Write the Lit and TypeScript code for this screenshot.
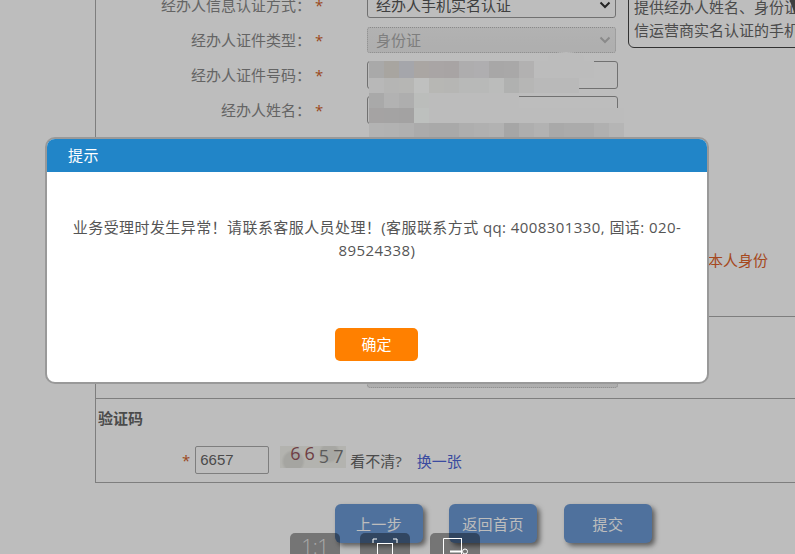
import { LitElement, html, css } from "lit";
import { customElement } from "lit/decorators.js";

const L = "#bcbcbc";
const mosaicRows: string[][] = [
  ["#a9a9a9","#a8a5a0","#a5a6ab","#aaa6a3","#a9a5a5","#a8a4a4","#aeadae","#afaeb0","#a8a7a7","#a9a8a8","#b2b1b1",L,L,L,L],
  ["#b8b8b8","#b5b5b4","#b6b6b4","#bfc0bf","#b7b7b4","#b6b6b4","#b8b9b8","#b8b9b8","#bbbcbb","#b0b1b0","#b6b6b5","#b9b9b9","#b9b9b9","#b9b9b9"],
  ["#a9a9a9","#b2b2b2","#aeaeae","#bbbdbb",L,L,L,L,L,L],
  ["#a5a3a3","#a4a3a3","#a3a2a2","#bdc0be",L,L,L,L,L,L,L,L,L,L,L,L,L],
  ["#b3b3b3","#b2b2b2","#b0b0b0","#ababab","#a9a9a9","#a9a9a9","#aeaeae","#b0b0b0","#b2b2b2","#a6a6a6","#aeaeae","#b2b2b2","#a9a9a9","#ababab","#ababab","#b0b0b0","#b5b5b5"],
];

@customElement("app-root")
export class AppRoot extends LitElement {
  static styles = css`
    :host { display: block; position: relative; width: 795px; height: 554px; overflow: hidden; background: #fff;
      font-family: "Open Sans", "Noto Sans CJK SC", sans-serif; font-size: 15px; color: #666; }
    * { box-sizing: border-box; }
    .form { margin: -13px 0 0 95px; height: 496px; border-left: 1px solid #aaa; border-bottom: 1px solid #aaa; display: flex; flex-direction: column; }
    .row { display: grid; grid-template-columns: 215px 56px 251px; height: 35px; align-items: center; flex: none; }
    .lab { text-align: right; color: #888; white-space: nowrap; }
    .star { color: #d2622a; padding-left: 4px; }
    .ctrl { height: 28px; border: 1px solid #999; border-radius: 3px; background: #fff; display: flex; align-items: center; justify-content: space-between; padding: 0 4px 0 8px; color: #555; white-space: nowrap; }
    .ctrl.sel { width: 249px; height: 26px; }
    .ctrl.off { border: 1px dotted #bbb; background: linear-gradient(#f0f0f0, #ececec); color: #aaa; }
    .hidden-gap { height: 189px; flex: none; position: relative; }
    .warn { position: absolute; left: 612px; top: 122px; color: #e0622a; }
    .rule { border-top: 1px solid #aaa; height: 82px; flex: none; position: relative; }
    .ghost { position: absolute; left: 271px; top: 30px; width: 251px; height: 41px; background: #ebebeb; border: 1px dotted #bbb; border-radius: 3px; }
    .sec { border-top: 1px solid #aaa; flex: 1; padding: 8px 0 0 2px; }
    .sec h4 { margin: 0; font-size: 15px; line-height: 22px; font-weight: 700; color: #666; font-family: "Noto Sans CJK SC", sans-serif; }
    .cap { display: flex; align-items: center; margin: 17px 0 0 84px; height: 28px; }
    .cap .s { color: #d2622a; margin-right: 5px; }
    .cap .in { width: 74px; height: 28px; border: 1px solid #aaa; border-radius: 2px; padding: 0 4px; line-height: 26px; color: #666; font-family: "Liberation Sans", sans-serif; }
    .img { width: 66px; height: 22px; margin: -6px 4px 0 11px; padding-left: 10px; overflow: hidden; white-space: nowrap;
      background: radial-gradient(circle at 20% 70%, #dfdfda 0 9px, transparent 12px), radial-gradient(circle at 75% 30%, #e2e2dc 0 8px, transparent 11px), #f2f2ec;
      font-size: 18px; line-height: 21px; letter-spacing: 4px; color: #7a7a7a; }
    .img b { font-weight: 400; color: #96545c; vertical-align: 3px; line-height: 0; }
    .cap a { color: #5067d8; margin-left: 15px; }
    .btns { display: flex; margin: 21px 0 0 335px; gap: 26px; }
    .btn { width: 88px; height: 39px; border-radius: 6px; background: #6b99d4; color: #fff; letter-spacing: .4px; display: flex; align-items: center; justify-content: center; box-shadow: 3px 3px 5px rgba(0,0,0,.5); }
    .btn + .btn + .btn { margin-left: 1px; }
    .tip { position: absolute; left: 628px; top: -13px; width: 200px; height: 61px; border: 1px solid #444; border-radius: 6px; padding: 8px 5px; color: #666; line-height: 23px; white-space: nowrap; background: #fff; overflow: hidden; }
    .blob { position: absolute; left: 788px; top: 0; width: 7px; height: 14px; background: #555; clip-path: polygon(20% 0, 100% 0, 100% 100%); }
    .mask { position: absolute; inset: 0; background: rgba(0,0,0,.26); }
    .mosaic { position: absolute; left: 369px; top: 61px; display: grid; grid-template-columns: repeat(17, 15px); grid-template-rows: 17px 15px 15px 15px 15px; }
    .smudge { position: absolute; left: 548px; top: 52px; width: 36px; height: 12px; background: #bcbcbc; border-radius: 50% 50% 0 0; }
    .modal { position: absolute; left: 45px; top: 137px; width: 664px; height: 247px; background: #fff; border: 2px solid #999; border-radius: 10px; overflow: hidden; display: flex; flex-direction: column; }
    .head { height: 33px; flex: none; background: #2185c8; color: #fff; padding-left: 21px; line-height: 33px; letter-spacing: .5px; }
    .msg { height: 156px; flex: none; padding: 44px 22px 0; text-align: center; line-height: 23px; color: #555; letter-spacing: .42px; }
    .ok { align-self: center; margin-right: 1px; width: 83px; height: 33px; background: #ff8000; color: #fff; border-radius: 5px; text-align: center; line-height: 33px; }
    .tools { position: absolute; left: 290px; top: 533px; display: flex; gap: 20px; }
    .tool { width: 50px; height: 30px; background: rgba(0,0,0,.38); border-radius: 5px 5px 0 0; display: flex; justify-content: center; padding-top: 5px; }
    .tool.txt { padding-top: 1px; color: #aaa; font-size: 21px; line-height: 24px; letter-spacing: -.5px; font-weight: 300; }
  `;

  private chevron(color: string) {
    return html`<svg width="12" height="8" viewBox="0 0 12 8"><path d="M1.5 1.5 6 6l4.5-4.5" fill="none" stroke=${color} stroke-width="2"/></svg>`;
  }

  render() {
    return html`
      <div class="form">
        <div class="row"><div class="lab">经办人信息认证方式：</div><div class="star">*</div><div class="ctrl sel"><span>经办人手机实名认证</span>${this.chevron("#333")}</div></div>
        <div class="row"><div class="lab">经办人证件类型：</div><div class="star">*</div><div class="ctrl sel off"><span>身份证</span>${this.chevron("#bbb")}</div></div>
        <div class="row"><div class="lab">经办人证件号码：</div><div class="star">*</div><div class="ctrl"></div></div>
        <div class="row"><div class="lab">经办人姓名：</div><div class="star">*</div><div class="ctrl"></div></div>
        <div class="hidden-gap"><div class="warn">本人身份</div></div>
        <div class="rule"><div class="ghost"></div></div>
        <div class="sec">
          <h4>验证码</h4>
          <div class="cap"><span class="s">*</span><div class="in">6657</div><div class="img"><b>66</b>57</div><span>看不清?</span><a>换一张</a></div>
        </div>
      </div>
      <div class="btns"><div class="btn">上一步</div><div class="btn">返回首页</div><div class="btn">提交</div></div>
      <div class="tip">提供经办人姓名、身份证<br />信运营商实名认证的手机</div>
      <div class="blob"></div>
      <div class="mask"></div>
      <div class="smudge"></div>
      <div class="mosaic">
        ${mosaicRows.map((r) => Array.from({ length: 17 }, (_, i) => html`<div style="background:${r[i] ?? "transparent"}"></div>`))}
      </div>
      <div class="modal">
        <div class="head">提示</div>
        <div class="msg">业务受理时发生异常！请联系客服人员处理！(客服联系方式 qq: 4008301330, 固话: 020-89524338)</div>
        <div class="ok">确定</div>
      </div>
      <div class="tools">
        <div class="tool txt">1:1</div>
        <div class="tool"><svg width="26" height="21" viewBox="0 0 26 21" fill="none" stroke="#fff"><path d="M1 5V1h4M21 1h4v4" /><rect x="5.5" y="5.5" width="15" height="16" /></svg></div>
        <div class="tool"><svg width="26" height="21" viewBox="0 0 26 21" fill="none" stroke="#fff"><path d="M20 .5H1.5V21M19.5 .5V21" /><path d="M8 13.5h11.5" stroke-width="2" /><circle cx="23" cy="13.5" r="2.5" /></svg></div>
      </div>
    `;
  }
}
